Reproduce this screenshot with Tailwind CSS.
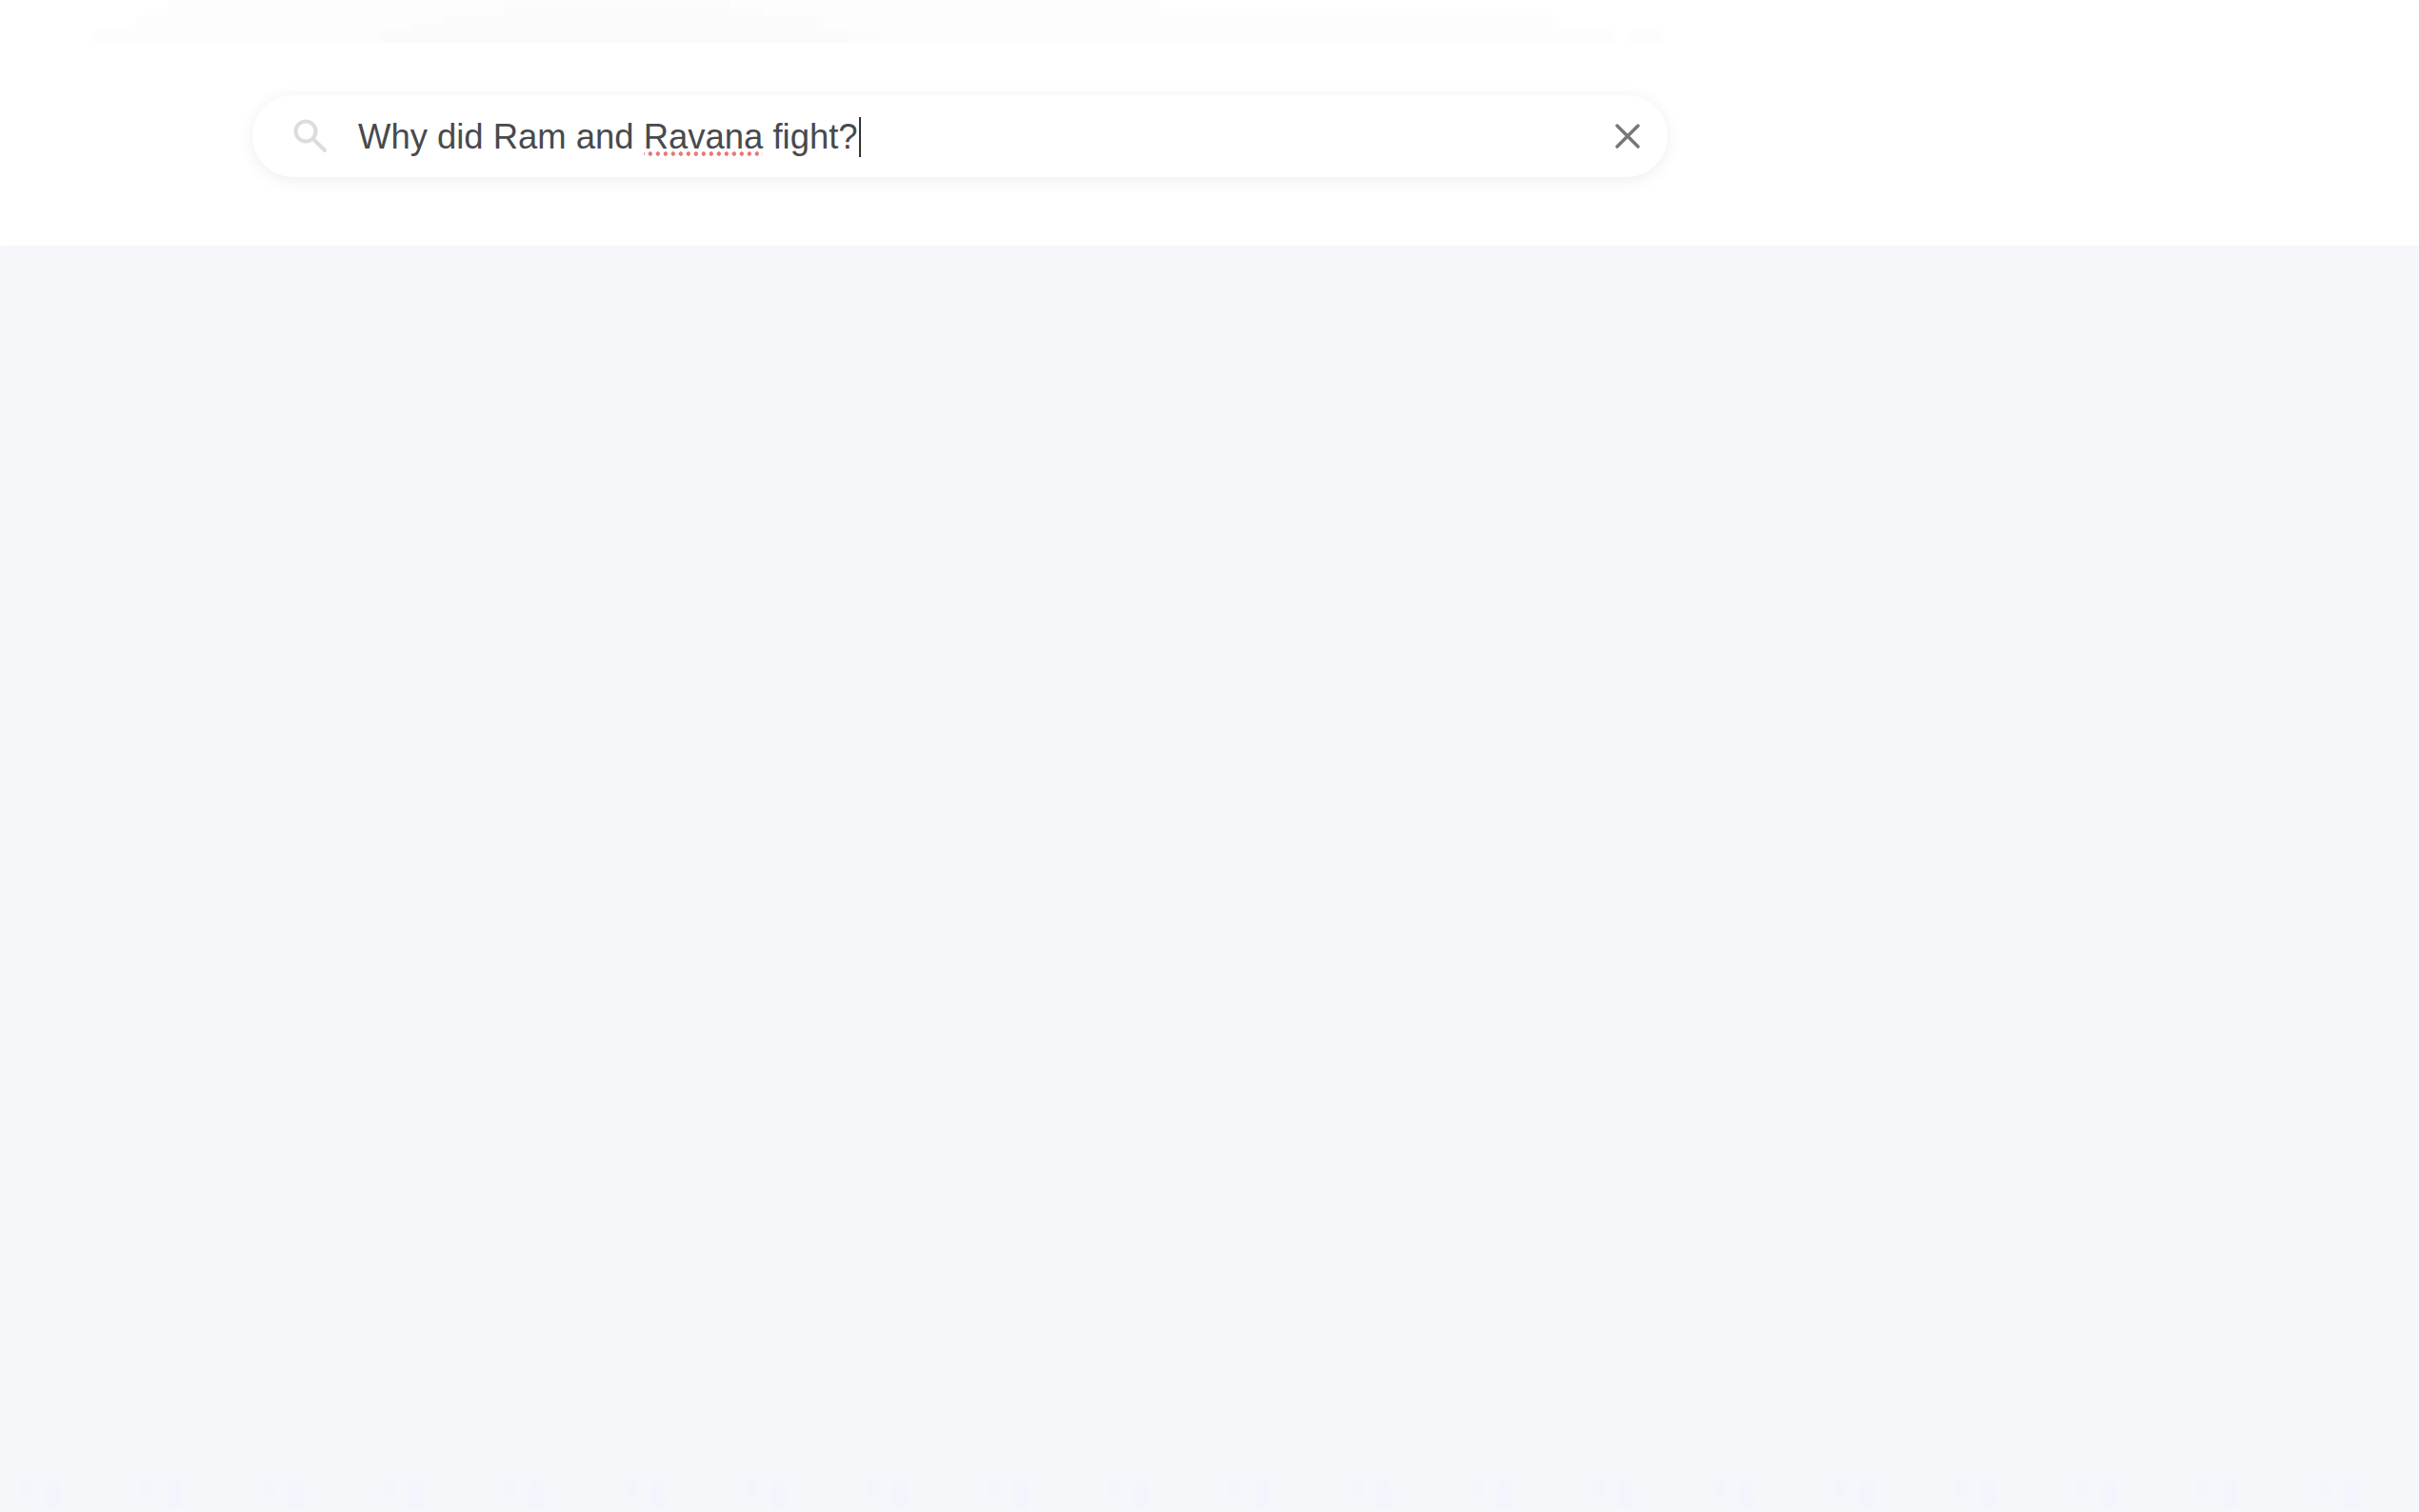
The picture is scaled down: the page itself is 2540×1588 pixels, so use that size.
<!DOCTYPE html>
<html lang="en">
<head>
<meta charset="utf-8">
<title>Search</title>
<script src="https://cdn.jsdelivr.net/npm/@tailwindcss/browser@4"></script>
</head>
<body class="m-0 bg-[#f6f7fb] font-['Liberation_Sans',Arial,sans-serif]">
<div class="flex flex-col w-[2540px] h-[1588px] overflow-hidden">
  <header class="h-[258px] shrink-0 bg-white shadow-[0_1px_3px_rgba(0,0,0,0.01)] flex flex-col">
    <div class="h-[45px] shrink-0 flex items-end blur-[1px]">
      <div class="w-[96px] h-full"></div>
      <div class="w-[47px] h-[13px] bg-[#fdfdfd]"></div>
      <div class="w-[32px] h-[29px] bg-[#fdfdfd]"></div>
      <div class="w-[225px] h-[45px] bg-[#fdfdfd]"></div>
      <div class="w-[32px] h-full bg-[#fdfdfd] flex items-end"><div class="w-full h-[13px] bg-[#fbfbfb]"></div></div>
      <div class="w-[32px] h-full bg-[#fdfdfd] flex items-end"><div class="w-full h-[21px] bg-[#fbfbfb]"></div></div>
      <div class="w-[64px] h-full bg-[#fdfdfd] flex items-end"><div class="w-full h-[29px] bg-[#fbfbfb]"></div></div>
      <div class="w-[239px] h-[45px] bg-[#fbfbfb]"></div>
      <div class="w-[33px] h-full bg-[#fdfdfd] flex items-end"><div class="w-full h-[37px] bg-[#fbfbfb]"></div></div>
      <div class="w-[64px] h-full bg-[#fdfdfd] flex items-end"><div class="w-full h-[29px] bg-[#fbfbfb]"></div></div>
      <div class="w-[29px] h-full bg-[#fdfdfd] flex items-end"><div class="w-full h-[13px] bg-[#fbfbfb]"></div></div>
      <div class="w-[37px] h-full bg-[#fdfdfd] flex items-end"><div class="w-full h-[9px] bg-[#fcfcfc]"></div></div>
      <div class="w-[287px] h-[45px] bg-[#fdfdfd]"></div>
      <div class="w-[414px] h-[29px] bg-[#fdfdfd]"></div>
      <div class="w-[64px] h-[13px] bg-[#fdfdfd]"></div>
      <div class="w-[15px] h-[13px]"></div>
      <div class="w-[35px] h-[13px] bg-[#fdfdfd]"></div>
    </div>
    <div class="pt-[55px] pl-[265px]">
      <div class="w-[1486px] h-[86px] rounded-[43px] bg-white shadow-[0_3px_18px_rgba(0,0,0,0.07)] flex items-center">
        <svg class="ml-[42px] w-[38px] h-[38px] shrink-0" viewBox="0 0 38 38" fill="none" stroke="#dcdcdc" stroke-width="4" stroke-linecap="round">
          <circle cx="14" cy="14" r="10.5"/>
          <path d="M22 22 L34 34"/>
        </svg>
        <div class="ml-[31px] flex items-center text-[36.45px] leading-[44px] text-[#484a4d] whitespace-nowrap pt-px">
          <span>Why did Ram and <span class="bg-[radial-gradient(circle,#e87878_2px,transparent_2.5px)] bg-[length:8px_5px] bg-repeat-x bg-bottom">Ravana</span> fight?</span>
          <span class="ml-[1px] w-[2px] h-[42px] bg-[#333333]"></span>
        </div>
        <svg class="ml-auto mr-[27px] w-[30px] h-[30px] shrink-0" viewBox="0 0 30 30" fill="none" stroke="#777777" stroke-width="3.5" stroke-linecap="round">
          <path d="M4 4 L26 26 M26 4 L4 26"/>
        </svg>
      </div>
    </div>
  </header>
  <main class="flex-1 flex flex-col justify-end">
    <div class="h-[33px] flex items-start blur-[1px]">
      <div class="w-[127px] h-full pl-[20px] flex gap-[13px]"><div class="w-[15px] h-[17px] rounded-full bg-[#f4f5fc]"></div><div class="w-[16px] h-[30px] rounded-t-full bg-[#f4f5fc]"></div></div>
      <div class="w-[127px] h-full pl-[20px] flex gap-[13px]"><div class="w-[15px] h-[17px] rounded-full bg-[#f4f5fc]"></div><div class="w-[16px] h-[30px] rounded-t-full bg-[#f4f5fc]"></div></div>
      <div class="w-[127px] h-full pl-[20px] flex gap-[13px]"><div class="w-[15px] h-[17px] rounded-full bg-[#f4f5fc]"></div><div class="w-[16px] h-[30px] rounded-t-full bg-[#f4f5fc]"></div></div>
      <div class="w-[127px] h-full pl-[20px] flex gap-[13px]"><div class="w-[15px] h-[17px] rounded-full bg-[#f4f5fc]"></div><div class="w-[16px] h-[30px] rounded-t-full bg-[#f4f5fc]"></div></div>
      <div class="w-[127px] h-full pl-[20px] flex gap-[13px]"><div class="w-[15px] h-[17px] rounded-full bg-[#f4f5fc]"></div><div class="w-[16px] h-[30px] rounded-t-full bg-[#f4f5fc]"></div></div>
      <div class="w-[127px] h-full pl-[20px] flex gap-[13px]"><div class="w-[15px] h-[17px] rounded-full bg-[#f4f5fc]"></div><div class="w-[16px] h-[30px] rounded-t-full bg-[#f4f5fc]"></div></div>
      <div class="w-[127px] h-full pl-[20px] flex gap-[13px]"><div class="w-[15px] h-[17px] rounded-full bg-[#f4f5fc]"></div><div class="w-[16px] h-[30px] rounded-t-full bg-[#f4f5fc]"></div></div>
      <div class="w-[127px] h-full pl-[20px] flex gap-[13px]"><div class="w-[15px] h-[17px] rounded-full bg-[#f4f5fc]"></div><div class="w-[16px] h-[30px] rounded-t-full bg-[#f4f5fc]"></div></div>
      <div class="w-[127px] h-full pl-[20px] flex gap-[13px]"><div class="w-[15px] h-[17px] rounded-full bg-[#f4f5fc]"></div><div class="w-[16px] h-[30px] rounded-t-full bg-[#f4f5fc]"></div></div>
      <div class="w-[127px] h-full pl-[20px] flex gap-[13px]"><div class="w-[15px] h-[17px] rounded-full bg-[#f4f5fc]"></div><div class="w-[16px] h-[30px] rounded-t-full bg-[#f4f5fc]"></div></div>
      <div class="w-[127px] h-full pl-[20px] flex gap-[13px]"><div class="w-[15px] h-[17px] rounded-full bg-[#f4f5fc]"></div><div class="w-[16px] h-[30px] rounded-t-full bg-[#f4f5fc]"></div></div>
      <div class="w-[127px] h-full pl-[20px] flex gap-[13px]"><div class="w-[15px] h-[17px] rounded-full bg-[#f4f5fc]"></div><div class="w-[16px] h-[30px] rounded-t-full bg-[#f4f5fc]"></div></div>
      <div class="w-[127px] h-full pl-[20px] flex gap-[13px]"><div class="w-[15px] h-[17px] rounded-full bg-[#f4f5fc]"></div><div class="w-[16px] h-[30px] rounded-t-full bg-[#f4f5fc]"></div></div>
      <div class="w-[127px] h-full pl-[20px] flex gap-[13px]"><div class="w-[15px] h-[17px] rounded-full bg-[#f4f5fc]"></div><div class="w-[16px] h-[30px] rounded-t-full bg-[#f4f5fc]"></div></div>
      <div class="w-[127px] h-full pl-[20px] flex gap-[13px]"><div class="w-[15px] h-[17px] rounded-full bg-[#f4f5fc]"></div><div class="w-[16px] h-[30px] rounded-t-full bg-[#f4f5fc]"></div></div>
      <div class="w-[127px] h-full pl-[20px] flex gap-[13px]"><div class="w-[15px] h-[17px] rounded-full bg-[#f4f5fc]"></div><div class="w-[16px] h-[30px] rounded-t-full bg-[#f4f5fc]"></div></div>
      <div class="w-[127px] h-full pl-[20px] flex gap-[13px]"><div class="w-[15px] h-[17px] rounded-full bg-[#f4f5fc]"></div><div class="w-[16px] h-[30px] rounded-t-full bg-[#f4f5fc]"></div></div>
      <div class="w-[127px] h-full pl-[20px] flex gap-[13px]"><div class="w-[15px] h-[17px] rounded-full bg-[#f4f5fc]"></div><div class="w-[16px] h-[30px] rounded-t-full bg-[#f4f5fc]"></div></div>
      <div class="w-[127px] h-full pl-[20px] flex gap-[13px]"><div class="w-[15px] h-[17px] rounded-full bg-[#f4f5fc]"></div><div class="w-[16px] h-[30px] rounded-t-full bg-[#f4f5fc]"></div></div>
      <div class="w-[127px] h-full pl-[20px] flex gap-[13px]"><div class="w-[15px] h-[17px] rounded-full bg-[#f4f5fc]"></div><div class="w-[16px] h-[30px] rounded-t-full bg-[#f4f5fc]"></div></div>
    </div>
  </main>
</div>
</body>
</html>
